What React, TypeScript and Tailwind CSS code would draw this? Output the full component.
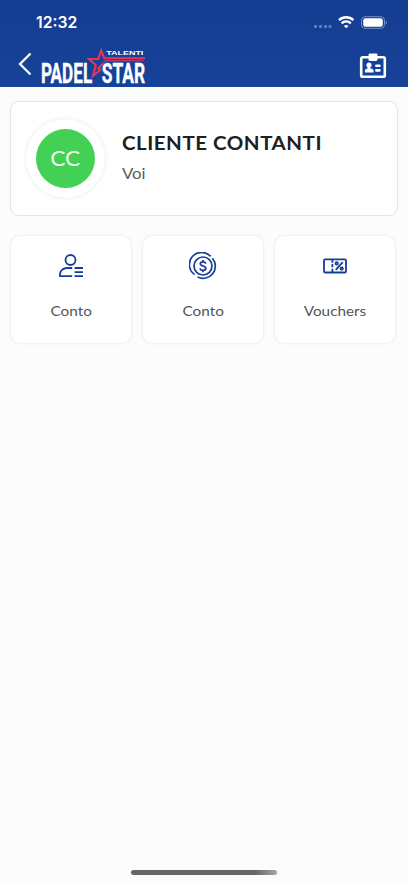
import type { ReactNode } from "react";

function StatusBar() {
  return (
    <div className="flex h-[44px] items-center justify-between pl-[36px] pr-[21px]">
      <span className="origin-left scale-x-[0.98] font-['Inter',sans-serif] text-[16px] font-semibold leading-[20px]">
        12:32
      </span>
      <svg width="74" height="16" viewBox="0 0 74 16" fill="none">
        <g fill="#6381bd">
          <rect x="1" y="11" width="3" height="3" rx="1" />
          <rect x="6" y="11" width="3" height="3" rx="1" />
          <rect x="11" y="11" width="3" height="3" rx="1" />
          <rect x="15.500" y="11" width="3" height="3" rx="1" />
        </g>
        <g stroke="#fff" strokeWidth="2.400">
          <path d="M26 6.200a10.200 10.200 0 0 1 14.400 0" />
          <path d="M28.600 9.300a6.500 6.500 0 0 1 9.200 0" />
        </g>
        <path d="M33.200 14.300 30.900 12a3.300 3.300 0 0 1 4.600 0Z" fill="#fff" />
        <rect x="48.500" y="2.700" width="23" height="11.600" rx="3.600" stroke="#7390c8" />
        <rect x="50.200" y="4.300" width="19.600" height="8.400" rx="2.200" fill="#fff" />
        <path d="M72.700 6.700c1.600.5 1.600 3.300 0 3.800Z" fill="#7390c8" />
      </svg>
    </div>
  );
}

function Logo() {
  return (
    <svg width="112" height="50" viewBox="0 -5 112 50" fill="none" className="ml-[7px] shrink-0">
      <g fill="#fff">
        <g fontFamily="'Roboto', 'Liberation Sans', sans-serif" fontSize="28" fontWeight="700" stroke="#fff" strokeWidth="0.350">
          <text transform="translate(0.900 37) scale(0.6 1)" textLength="85.500" lengthAdjust="spacingAndGlyphs">
            PADEL
          </text>
          <text transform="translate(61.800 37) scale(0.6 1)" textLength="72.300" lengthAdjust="spacingAndGlyphs">
            STAR
          </text>
        </g>
        <text
          transform="translate(66.300 9) scale(1.55 1)"
          fontFamily="'Liberation Sans', sans-serif"
          fontSize="4.800"
          fontWeight="700"
          textLength="23.900"
          lengthAdjust="spacingAndGlyphs"
        >
          TALENTI
        </text>
      </g>
      <path
        d="M105 12.300H64.300L61.300 4.600 58.200 13H49l6.800 6-2.800 10.800 7.600-6-2.400-1.400 4.800-4.700"
        stroke="#e5365c"
        strokeWidth="2.100"
      />
      <path d="M103.500 14.700H65.500l-3.200 3" stroke="#e5365c" strokeWidth="1.100" />
    </svg>
  );
}

function BadgeIcon() {
  return (
    <svg width="28" height="26" viewBox="0 0 28 26" fill="#fff">
      <rect x="2.200" y="4.200" width="23.600" height="19.600" rx="1.600" fill="none" stroke="#fff" strokeWidth="2.600" />
      <rect x="9.500" y="0.500" width="9" height="7.500" rx="1.400" />
      <circle cx="10" cy="12" r="2.600" />
      <path d="M8.700 13.500h2.600v1.800l2.500 1c.6.300.8.700.8 1.300v2H5.900v-2c0-.6.300-1 .8-1.300l2-1Z" />
      <rect x="16.200" y="11.400" width="5.400" height="2.700" rx="0.800" />
      <rect x="16.200" y="16" width="5.400" height="2.700" rx="0.800" />
    </svg>
  );
}

function AccountIcon() {
  return (
    <svg width="28" height="28" viewBox="0 0 28 28" fill="none" stroke="#173e96" strokeWidth="1.800">
      <circle cx="13.500" cy="8" r="5" />
      <path d="M15.200 16H10c-4 0-7 2.800-7 6.600v1.500h12.200M17.600 16H26M17.600 20.100H26M17.600 24.100H26" />
    </svg>
  );
}

function CoinIcon() {
  return (
    <svg width="28" height="28" viewBox="0 0 28 28" fill="none" stroke="#173e96" strokeWidth="1.700">
      <path d="M5.600 22.600A12.200 12.200 0 1 1 21.600 4.400M23.400 6.200A12.200 12.200 0 0 1 8.600 25" />
      <circle cx="14" cy="14" r="9" />
      <path d="M16.800 11.600c-.2-1.200-1.200-1.800-2.800-1.800s-2.700.7-2.700 2c0 3 5.500 1.500 5.500 4.500 0 1.300-1.100 2-2.800 2s-2.700-.7-2.900-2M14 8v2M14 18.200v2" />
    </svg>
  );
}

function VoucherIcon() {
  return (
    <svg width="28" height="28" viewBox="0 0 28 28" fill="none" stroke="#173e96" strokeWidth="1.800">
      <rect x="3" y="7.300" width="22" height="13.200" rx="1.300" />
      <path d="M11.400 7.500v13" strokeDasharray="3.200 1.400" />
      <path d="m21.700 10.200-6.900 7.600" />
      <circle cx="15.700" cy="11.400" r="1.200" />
      <circle cx="20.700" cy="16.600" r="1.200" />
    </svg>
  );
}

function Tile({ icon, children }: { icon: ReactNode; children: ReactNode }) {
  return (
    <div className="flex h-[107px] flex-col items-center rounded-[9px] bg-white pt-[16px] shadow-[0_0_3px_rgba(0,0,0,0.12)]">
      {icon}
      <div className="mt-[21px] scale-x-[1.08] whitespace-nowrap font-['Lato',sans-serif] text-[14.200px] leading-[20px] text-[#555555]">
        {children}
      </div>
    </div>
  );
}

export default function App() {
  return (
    <div className="flex h-[883px] w-[408px] flex-col overflow-hidden bg-[#fcfcfc]">
      <header className="h-[87px] bg-gradient-to-b from-[#143d91] to-[#174299] text-white">
        <StatusBar />
        <div className="flex h-[43px] items-center pl-[18px] pr-[21px]">
          <svg width="15" height="24" viewBox="0 0 15 24" fill="none" stroke="#fff" strokeWidth="2.300" className="-mt-[4px]">
            <path d="M12.500 1.500 2 12l10.500 10.500" />
          </svg>
          <Logo />
          <div className="ml-auto">
            <BadgeIcon />
          </div>
        </div>
      </header>

      <main className="flex-1 px-[10px] pt-[14px]">
        <section className="flex h-[115px] rounded-[9px] border border-[#e5e5e5] bg-white pl-[15px] pt-[17px] shadow-[0_0_3px_rgba(0,0,0,0.04)]">
          <div className="flex size-[79px] shrink-0 items-center justify-center rounded-full bg-white shadow-[0_0_4px_rgba(0,0,0,0.1)]">
            <div className="flex size-[59px] items-center justify-center rounded-full bg-[#43d155]">
              <span className="scale-x-[1.06] font-['Lato',sans-serif] text-[21.500px] leading-none text-white/90">
                CC
              </span>
            </div>
          </div>
          <div className="ml-[17px] pt-[10px] font-['Lato',sans-serif]">
            <h1 className="origin-left scale-x-[1.05] whitespace-nowrap text-[19.500px] font-bold leading-[28px] tracking-[0.500px] text-[#202020]">
              CLIENTE CONTANTI
            </h1>
            <p className="mt-[4px] origin-left scale-x-[1.08] text-[15.500px] leading-[24px] text-[#5c5c5c]">
              Voi
            </p>
          </div>
        </section>

        <section className="mt-[20px] grid grid-cols-3 gap-[12px] pl-px pr-[3px]">
          <Tile icon={<AccountIcon />}>Conto</Tile>
          <Tile icon={<CoinIcon />}>Conto</Tile>
          <Tile icon={<VoucherIcon />}>Vouchers</Tile>
        </section>
      </main>

      <div className="mx-auto mb-[8px] h-[5px] w-[146px] rounded-full bg-gradient-to-r from-[#656865] from-85% to-[#a5a8a5]" />
    </div>
  );
}
